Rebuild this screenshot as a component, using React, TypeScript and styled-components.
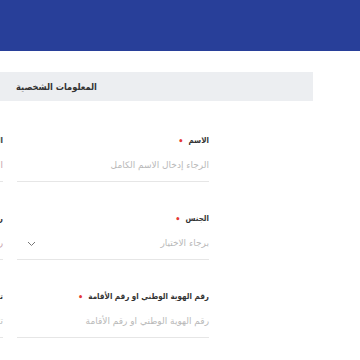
import React from "react";
import styled, { createGlobalStyle } from "styled-components";

const Global = createGlobalStyle`
  html, body { margin: 0; padding: 0; background: #ffffff; }
  body { width: 360px; height: 360px; overflow: hidden; font-family: "DejaVu Sans", "Noto Sans", sans-serif; }
`;

const Page = styled.div`
  width: 360px;
  height: 360px;
  overflow: hidden;
  display: flex;
  flex-direction: column;
`;

const Header = styled.header`
  height: 51px;
  background: #283f99;
  flex-shrink: 0;
`;

const SectionBar = styled.div`
  margin: 21px 47px 0 0;
  height: 29px;
  background: #eceef1;
  display: flex;
  align-items: center;
  padding-left: 16px;
`;

const SectionTitle = styled.h2`
  margin: 0;
  font-family: "DejaVu Sans Condensed", "DejaVu Sans", sans-serif;
  font-size: 9.2px;
  font-weight: bold;
  color: #333;
  direction: rtl;
`;

const FormArea = styled.div`
  display: flex;
  justify-content: flex-end;
  padding-right: 151px;
  margin-top: 33px;
`;

const Grid = styled.div`
  direction: rtl;
  display: grid;
  grid-template-columns: 192px 192px;
  column-gap: 14px;
  row-gap: 30px;
  flex-shrink: 0;
`;

const Field = styled.div`
  display: flex;
  flex-direction: column;
`;

const Label = styled.label`
  font-family: "DejaVu Sans Condensed", "DejaVu Sans", sans-serif;
  font-size: 8px;
  font-weight: bold;
  color: #333;
  height: 14px;
  line-height: 14px;
  display: flex;
  align-items: center;
  gap: 5px;
`;

const Star = styled.span`
  color: #e53935;
  font-size: 9px;
`;

const Control = styled.div`
  margin-top: 10px;
  height: 23px;
  border-bottom: 1px solid #e6e6e6;
  display: flex;
  align-items: flex-start;
  justify-content: space-between;
`;

const Placeholder = styled.span<{ $tone?: string }>`
  font-size: 9px;
  color: ${(p) => p.$tone || "#b9b9b9"};
  line-height: 14px;
`;

const Chevron = styled.svg`
  margin-left: 10px;
  margin-top: 5px;
`;

type F = { label: string; ph: string; select?: boolean; tone?: string };

const fields: F[] = [
  { label: "الاسم", ph: "الرجاء إدخال الاسم الكامل" },
  { label: "البريد الإلكتروني", ph: "البريد الإلكتروني", tone: "#c9a3ad" },
  { label: "الجنس", ph: "برجاء الاختيار", select: true },
  { label: "رقم الجوال", ph: "رقم الجوال", tone: "#c9a3ad" },
  { label: "رقم الهوية الوطني او رقم الأقامة", ph: "رقم الهوية الوطني او رقم الأقامة" },
  { label: "تاريخ الميلاد", ph: "تاريخ الميلاد" },
];

export default function App() {
  return (
    <Page>
      <Global />
      <Header />
      <SectionBar>
        <SectionTitle>المعلومات الشخصية</SectionTitle>
      </SectionBar>
      <FormArea>
        <Grid>
          {fields.map((f) => (
            <Field key={f.label}>
              <Label>
                {f.label}
                <Star>•</Star>
              </Label>
              <Control>
                <Placeholder $tone={f.tone}>{f.ph}</Placeholder>
                {f.select && (
                  <Chevron width="9" height="6" viewBox="0 0 9 6">
                    <path d="M1 1l3.5 3.5L8 1" fill="none" stroke="#777" strokeWidth="1" />
                  </Chevron>
                )}
              </Control>
            </Field>
          ))}
        </Grid>
      </FormArea>
    </Page>
  );
}
